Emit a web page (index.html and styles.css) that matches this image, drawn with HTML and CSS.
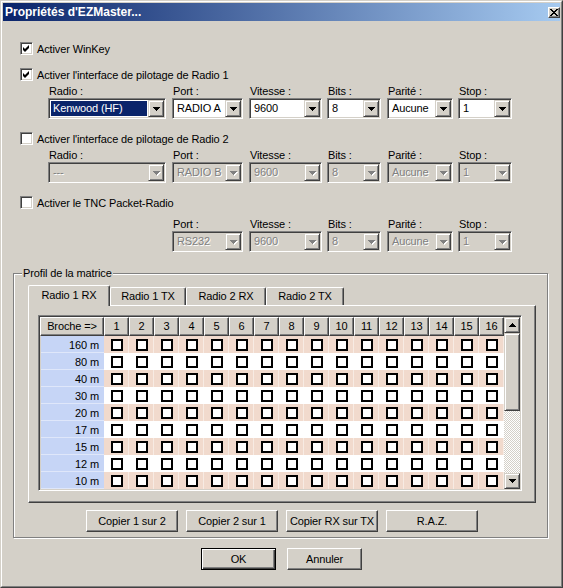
FILE: index.html
```html
<!DOCTYPE html>
<html lang="fr">
<head>
<meta charset="utf-8">
<title>Propriétés d'EZMaster...</title>
<link rel="stylesheet" href="styles.css">
</head>
<body>
<div class="window">
 <div class="frame">
  <div class="titlebar">
   <span class="title">Propriétés d'EZMaster...</span>
   <span class="close"><svg width="8" height="7" viewBox="0 0 8 7" shape-rendering="crispEdges"><path d="M0 0h2v1h1v1h2V1h1V0h2v1H7v1H6v1H5v1h1v1h1v1h1v1H6V6H5V5H3v1H2v1H0V6h1V5h1V4h1V3H2V2H1V1H0z" fill="#000"/></svg></span>
  </div>
  <div class="content">
   <div class="check c-winkey"><span class="box"><svg width="9" height="9" viewBox="0 0 9 9"><polygon points="1,3 3,5 7,1 7,4 3,8 1,6" fill="#000"/></svg></span><span>Activer WinKey</span></div>
   <div class="check c-sec"><span class="box"><svg width="9" height="9" viewBox="0 0 9 9"><polygon points="1,3 3,5 7,1 7,4 3,8 1,6" fill="#000"/></svg></span><span>Activer l'interface de pilotage de Radio 1</span></div>
   <div class="fields">
    <div class="field f-radio"><div class="flabel">Radio :</div><div class="combo"><span class="val sel">Kenwood (HF)</span><span class="arrow"><svg width="7" height="4" viewBox="0 0 7 4" shape-rendering="crispEdges"><path d="M0 0H7V1H6V2H5V3H4V4H3V3H2V2H1V1H0Z"/></svg></span></div></div>
    <div class="field f-port"><div class="flabel">Port :</div><div class="combo"><span class="val">RADIO A</span><span class="arrow"><svg width="7" height="4" viewBox="0 0 7 4" shape-rendering="crispEdges"><path d="M0 0H7V1H6V2H5V3H4V4H3V3H2V2H1V1H0Z"/></svg></span></div></div>
    <div class="field f-vit"><div class="flabel">Vitesse :</div><div class="combo"><span class="val">9600</span><span class="arrow"><svg width="7" height="4" viewBox="0 0 7 4" shape-rendering="crispEdges"><path d="M0 0H7V1H6V2H5V3H4V4H3V3H2V2H1V1H0Z"/></svg></span></div></div>
    <div class="field f-bits"><div class="flabel">Bits :</div><div class="combo"><span class="val">8</span><span class="arrow"><svg width="7" height="4" viewBox="0 0 7 4" shape-rendering="crispEdges"><path d="M0 0H7V1H6V2H5V3H4V4H3V3H2V2H1V1H0Z"/></svg></span></div></div>
    <div class="field f-par"><div class="flabel">Parité :</div><div class="combo"><span class="val">Aucune</span><span class="arrow"><svg width="7" height="4" viewBox="0 0 7 4" shape-rendering="crispEdges"><path d="M0 0H7V1H6V2H5V3H4V4H3V3H2V2H1V1H0Z"/></svg></span></div></div>
    <div class="field f-stop"><div class="flabel">Stop :</div><div class="combo"><span class="val">1</span><span class="arrow"><svg width="7" height="4" viewBox="0 0 7 4" shape-rendering="crispEdges"><path d="M0 0H7V1H6V2H5V3H4V4H3V3H2V2H1V1H0Z"/></svg></span></div></div>
   </div>

   <div class="check c-sec"><span class="box"></span><span>Activer l'interface de pilotage de Radio 2</span></div>
   <div class="fields">
    <div class="field f-radio"><div class="flabel">Radio :</div><div class="combo disabled"><span class="val">---</span><span class="arrow"><svg width="8" height="5" viewBox="0 0 8 5" shape-rendering="crispEdges"><path class="hl" d="M1 1H8V2H7V3H6V4H5V5H4V4H3V3H2V2H1Z"/><path class="sh" d="M0 0H7V1H6V2H5V3H4V4H3V3H2V2H1V1H0Z"/></svg></span></div></div>
    <div class="field f-port"><div class="flabel">Port :</div><div class="combo disabled"><span class="val">RADIO B</span><span class="arrow"><svg width="8" height="5" viewBox="0 0 8 5" shape-rendering="crispEdges"><path class="hl" d="M1 1H8V2H7V3H6V4H5V5H4V4H3V3H2V2H1Z"/><path class="sh" d="M0 0H7V1H6V2H5V3H4V4H3V3H2V2H1V1H0Z"/></svg></span></div></div>
    <div class="field f-vit"><div class="flabel">Vitesse :</div><div class="combo disabled"><span class="val">9600</span><span class="arrow"><svg width="8" height="5" viewBox="0 0 8 5" shape-rendering="crispEdges"><path class="hl" d="M1 1H8V2H7V3H6V4H5V5H4V4H3V3H2V2H1Z"/><path class="sh" d="M0 0H7V1H6V2H5V3H4V4H3V3H2V2H1V1H0Z"/></svg></span></div></div>
    <div class="field f-bits"><div class="flabel">Bits :</div><div class="combo disabled"><span class="val">8</span><span class="arrow"><svg width="8" height="5" viewBox="0 0 8 5" shape-rendering="crispEdges"><path class="hl" d="M1 1H8V2H7V3H6V4H5V5H4V4H3V3H2V2H1Z"/><path class="sh" d="M0 0H7V1H6V2H5V3H4V4H3V3H2V2H1V1H0Z"/></svg></span></div></div>
    <div class="field f-par"><div class="flabel">Parité :</div><div class="combo disabled"><span class="val">Aucune</span><span class="arrow"><svg width="8" height="5" viewBox="0 0 8 5" shape-rendering="crispEdges"><path class="hl" d="M1 1H8V2H7V3H6V4H5V5H4V4H3V3H2V2H1Z"/><path class="sh" d="M0 0H7V1H6V2H5V3H4V4H3V3H2V2H1V1H0Z"/></svg></span></div></div>
    <div class="field f-stop"><div class="flabel">Stop :</div><div class="combo disabled"><span class="val">1</span><span class="arrow"><svg width="8" height="5" viewBox="0 0 8 5" shape-rendering="crispEdges"><path class="hl" d="M1 1H8V2H7V3H6V4H5V5H4V4H3V3H2V2H1Z"/><path class="sh" d="M0 0H7V1H6V2H5V3H4V4H3V3H2V2H1V1H0Z"/></svg></span></div></div>
   </div>

   <div class="check c-sec"><span class="box"></span><span>Activer le TNC Packet-Radio</span></div>
   <div class="fields fields-tnc">
    <div class="field f-port f-first"><div class="flabel">Port :</div><div class="combo disabled"><span class="val">RS232</span><span class="arrow"><svg width="8" height="5" viewBox="0 0 8 5" shape-rendering="crispEdges"><path class="hl" d="M1 1H8V2H7V3H6V4H5V5H4V4H3V3H2V2H1Z"/><path class="sh" d="M0 0H7V1H6V2H5V3H4V4H3V3H2V2H1V1H0Z"/></svg></span></div></div>
    <div class="field f-vit"><div class="flabel">Vitesse :</div><div class="combo disabled"><span class="val">9600</span><span class="arrow"><svg width="8" height="5" viewBox="0 0 8 5" shape-rendering="crispEdges"><path class="hl" d="M1 1H8V2H7V3H6V4H5V5H4V4H3V3H2V2H1Z"/><path class="sh" d="M0 0H7V1H6V2H5V3H4V4H3V3H2V2H1V1H0Z"/></svg></span></div></div>
    <div class="field f-bits"><div class="flabel">Bits :</div><div class="combo disabled"><span class="val">8</span><span class="arrow"><svg width="8" height="5" viewBox="0 0 8 5" shape-rendering="crispEdges"><path class="hl" d="M1 1H8V2H7V3H6V4H5V5H4V4H3V3H2V2H1Z"/><path class="sh" d="M0 0H7V1H6V2H5V3H4V4H3V3H2V2H1V1H0Z"/></svg></span></div></div>
    <div class="field f-par"><div class="flabel">Parité :</div><div class="combo disabled"><span class="val">Aucune</span><span class="arrow"><svg width="8" height="5" viewBox="0 0 8 5" shape-rendering="crispEdges"><path class="hl" d="M1 1H8V2H7V3H6V4H5V5H4V4H3V3H2V2H1Z"/><path class="sh" d="M0 0H7V1H6V2H5V3H4V4H3V3H2V2H1V1H0Z"/></svg></span></div></div>
    <div class="field f-stop"><div class="flabel">Stop :</div><div class="combo disabled"><span class="val">1</span><span class="arrow"><svg width="8" height="5" viewBox="0 0 8 5" shape-rendering="crispEdges"><path class="hl" d="M1 1H8V2H7V3H6V4H5V5H4V4H3V3H2V2H1Z"/><path class="sh" d="M0 0H7V1H6V2H5V3H4V4H3V3H2V2H1V1H0Z"/></svg></span></div></div>
   </div>

   <div class="group">
    <span class="legend">Profil de la matrice</span>
    <div class="tabs">
     <div class="tab active t1">Radio 1 RX</div>
     <div class="tab t2">Radio 1 TX</div>
     <div class="tab t3">Radio 2 RX</div>
     <div class="tab t4">Radio 2 TX</div>
    </div>
    <div class="panel">
     <div class="gridframe">
      <div class="matrix">
       <div class="hcell hfirst">Broche =&gt;</div>
       <div class="hcell">1</div><div class="hcell">2</div><div class="hcell">3</div><div class="hcell">4</div>
       <div class="hcell">5</div><div class="hcell">6</div><div class="hcell">7</div><div class="hcell">8</div>
       <div class="hcell">9</div><div class="hcell">10</div><div class="hcell">11</div><div class="hcell">12</div>
       <div class="hcell">13</div><div class="hcell">14</div><div class="hcell">15</div><div class="hcell">16</div>
      </div>
      <div class="scrollbar">
       <div class="sbtn"><svg width="7" height="4" viewBox="0 0 7 4" shape-rendering="crispEdges"><path d="M3 0H4V1H5V2H6V3H7V4H0V3H1V2H2V1H3Z"/></svg></div>
       <div class="thumb"></div>
       <div class="track"></div>
       <div class="sbtn"><svg width="7" height="4" viewBox="0 0 7 4" shape-rendering="crispEdges"><path d="M0 0H7V1H6V2H5V3H4V4H3V3H2V2H1V1H0Z"/></svg></div>
      </div>
     </div>
    </div>
    <div class="actions">
     <div class="btn">Copier 1 sur 2</div>
     <div class="btn">Copier 2 sur 1</div>
     <div class="btn">Copier RX sur TX</div>
     <div class="btn">R.A.Z.</div>
    </div>
   </div>

   <div class="dialog-buttons">
    <div class="btn btn-ok">OK</div>
    <div class="btn btn-cancel">Annuler</div>
   </div>
  </div>
 </div>
</div>
<script>
(function(){
  var labels=["160 m","80 m","40 m","30 m","20 m","17 m","15 m","12 m","10 m"];
  var m=document.querySelector('.matrix');
  labels.forEach(function(l,i){
    var row=(i%2===0)?'pink':'white';
    var lc=document.createElement('div');
    lc.className='lcell';
    lc.textContent=l;
    m.appendChild(lc);
    for(var c=0;c<16;c++){
      var d=document.createElement('div');
      d.className='cell '+row;
      var s=document.createElement('span');
      s.className='sq';
      d.appendChild(s);
      m.appendChild(d);
    }
  });
})();
</script>
</body>
</html>
```
FILE: styles.css
```css
* { box-sizing: border-box; }
html, body { margin: 0; padding: 0; }
body {
  background: #d4d0c8;
  font-family: "Liberation Sans", Arial, sans-serif;
  font-size: 11px;
  letter-spacing: -0.12px;
  color: #000;
}
.window {
  width: 563px;
  height: 588px;
  border: 1px solid;
  border-color: #d4d0c8 #404040 #404040 #d4d0c8;
}
.frame {
  height: 100%;
  border: 1px solid;
  border-color: #fff #808080 #808080 #fff;
  padding: 1px;
  display: flex;
  flex-direction: column;
}
.titlebar {
  height: 18px;
  flex: none;
  background: linear-gradient(to right, #0a246a, #a6caf0);
  display: flex;
  align-items: center;
  justify-content: space-between;
  padding: 0 0 0 2px;
}
.title {
  color: #fff;
  font-weight: bold;
  font-size: 12px;
  letter-spacing: 0;
  line-height: 18px;
}
.close {
  width: 12px;
  height: 11px;
  margin-top: 1px;
  background: #d4d0c8;
  border: 1px solid;
  border-color: #fff #404040 #404040 #fff;
  box-shadow: inset -1px -1px 0 #808080;
  display: flex;
  align-items: center;
  justify-content: center;
}
.content { flex: 1; }

/* checkboxes */
.check {
  display: flex;
  align-items: center;
  gap: 4px;
  height: 13px;
  margin-left: 17px;
  line-height: 13px;
  white-space: nowrap;
}
.check span:last-child { position: relative; top: 1px; }
.c-winkey { margin-top: 21px; }
.c-sec { margin-top: 13px; }
.box {
  width: 13px;
  height: 13px;
  flex: none;
  background: #fff;
  border: 1px solid;
  border-color: #808080 #fff #fff #808080;
  box-shadow: inset 1px 1px 0 #404040, inset -1px -1px 0 #d4d0c8;
  padding: 1px;
  display: flex;
}
.box svg { display: block; }

/* combo fields */
.fields {
  display: flex;
  margin-left: 45px;
  margin-top: 4px;
}
.fields-tnc { margin-top: 9px; }
.field { display: flex; flex-direction: column; }
.flabel { height: 13px; line-height: 13px; padding-left: 1px; white-space: nowrap; }
.f-radio { width: 118px; }
.f-port { width: 71px; margin-left: 6px; }
.f-vit { width: 73px; margin-left: 6px; }
.f-bits { width: 54px; margin-left: 5px; }
.f-par { width: 66px; margin-left: 6px; }
.f-stop { width: 54px; margin-left: 5px; }
.f-first { margin-left: 124px; }
.combo {
  height: 21px;
  display: flex;
  background: #fff;
  border: 1px solid;
  border-color: #808080 #fff #fff #808080;
  box-shadow: inset 1px 1px 0 #404040, inset -1px -1px 0 #d4d0c8;
  padding: 1px;
}
.val {
  flex: 1;
  min-width: 0;
  white-space: nowrap;
  overflow: hidden;
  margin: 1px;
  padding-left: 2px;
  line-height: 15px;
}
.val.sel { background: #0a246a; color: #fff; }
.arrow {
  width: 16px;
  flex: none;
  background: #d4d0c8;
  border: 1px solid;
  border-color: #d4d0c8 #404040 #404040 #d4d0c8;
  box-shadow: inset 1px 1px 0 #fff, inset -1px -1px 0 #808080;
  display: flex;
  align-items: center;
  justify-content: center;
}
.arrow svg { display: block; }
.combo.disabled { background: #d4d0c8; }
.combo.disabled .val { color: #808080; text-shadow: 1px 1px 0 #fff; }
.combo.disabled .arrow svg { margin-left: 1px; margin-top: 1px; }
.hl { fill: #fff; }
.sh { fill: #808080; }

/* group box */
.group {
  position: relative;
  margin-top: 21px;
  margin-left: 10px;
  width: 535px;
  height: 265px;
  border: 1px solid #808080;
  box-shadow: inset 1px 1px 0 #fff, 1px 1px 0 #fff;
  padding: 11px 0 0 14px;
}
.legend {
  position: absolute;
  top: -7px;
  left: 8px;
  padding: 0 1px;
  background: #d4d0c8;
  line-height: 13px;
  white-space: nowrap;
}
.tabs {
  display: flex;
  align-items: flex-end;
  height: 20px;
}
.tab {
  height: 18px;
  text-align: center;
  line-height: 17px;
  background: #d4d0c8;
  border-top: 1px solid #fff;
  border-left: 1px solid #fff;
  border-right: 1px solid #404040;
  box-shadow: inset -1px 0 0 #808080;
  border-radius: 2px 2px 0 0;
  white-space: nowrap;
}
.tab.active {
  height: 21px;
  margin-bottom: -1px;
  position: relative;
  z-index: 1;
  line-height: 18px;
}
.t1 { width: 82px; }
.t2 { width: 76px; }
.t3 { width: 80px; }
.t4 { width: 78px; }
.panel {
  width: 508px;
  height: 198px;
  border-top: 1px solid #fff;
  border-left: 1px solid #fff;
  border-right: 1px solid #404040;
  border-bottom: 1px solid #404040;
  box-shadow: inset -1px -1px 0 #808080;
  padding: 9px 0 0 9px;
}
.gridframe {
  width: 484px;
  height: 176px;
  border: 1px solid;
  border-color: #808080 #fff #fff #808080;
  box-shadow: inset 1px 1px 0 #404040, inset -1px -1px 0 #d4d0c8;
  padding: 1px;
  display: flex;
  background: #d4d0c8;
}
.matrix {
  display: grid;
  grid-template-columns: 64px repeat(16, 25px);
  grid-template-rows: 19px repeat(9, 17px);
  width: 464px;
}
.hcell {
  background: #d4d0c8;
  border: 1px solid;
  border-color: #fff #404040 #404040 #fff;
  box-shadow: inset -1px -1px 0 #808080;
  text-align: center;
  line-height: 17px;
  white-space: nowrap;
}
.lcell {
  background: #c6d5f6;
  border-bottom: 1px solid #dfe7fa;
  margin-left: 1px;
  text-align: right;
  padding-right: 5px;
  line-height: 17px;
  padding-top: 1px;
  white-space: nowrap;
}
.cell {
  display: flex;
  align-items: center;
  justify-content: center;
  border-right: 1px solid rgba(255,255,255,0.45);
}
.cell.pink { background: #f1dacd; }
.cell.white { background: #fff; }
.sq {
  width: 12px;
  height: 12px;
  border: 2px solid #000;
  background: #fff;
  margin-left: 1px;
}
.scrollbar {
  width: 16px;
  display: flex;
  flex-direction: column;
}
.sbtn, .thumb {
  background: #d4d0c8;
  border: 1px solid;
  border-color: #d4d0c8 #404040 #404040 #d4d0c8;
  box-shadow: inset 1px 1px 0 #fff, inset -1px -1px 0 #808080;
}
.sbtn {
  height: 16px;
  display: flex;
  align-items: center;
  justify-content: center;
}
.sbtn svg { display: block; }
.thumb { height: 78px; }
.track {
  flex: 1;
  background: repeating-conic-gradient(#d4d0c8 0 25%, #fff 0 50%) 0 0 / 2px 2px;
}

/* buttons */
.actions {
  display: flex;
  gap: 8px;
  margin-top: 7px;
  margin-left: 58px;
}
.btn {
  width: 92px;
  height: 22px;
  background: #d4d0c8;
  border: 1px solid;
  border-color: #fff #404040 #404040 #fff;
  box-shadow: inset -1px -1px 0 #808080;
  text-align: center;
  line-height: 20px;
  white-space: nowrap;
}
.dialog-buttons {
  display: flex;
  justify-content: center;
  gap: 11px;
  margin-top: 10px;
}
.btn-ok, .btn-cancel { width: 75px; }
.btn-ok {
  border: 1px solid #000;
  box-shadow: inset 1px 1px 0 #fff, inset -1px -1px 0 #404040, inset -2px -2px 0 #808080;
}
```
